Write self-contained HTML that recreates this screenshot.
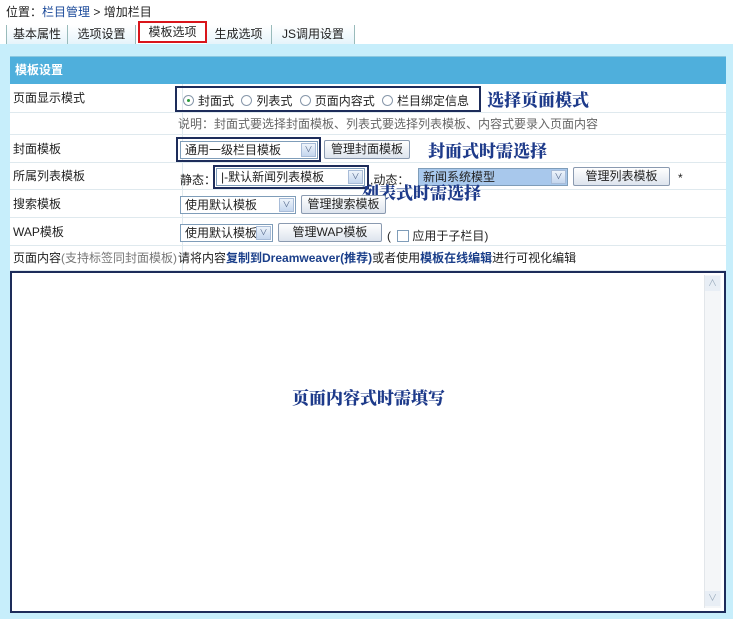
<!DOCTYPE html>
<html><head><meta charset="utf-8"><style>
*{margin:0;padding:0;box-sizing:border-box}
body{width:733px;height:619px;background:#fff;position:relative;overflow:hidden;font-family:"Liberation Sans","Noto Sans CJK SC",sans-serif;font-size:12px;color:#222}
.a{position:absolute;white-space:nowrap}
.tab{position:absolute;top:25px;height:20px;background:linear-gradient(#fff,#e4f3fa);border-right:1px solid #9bb;font-size:12px;line-height:19px;text-align:center}
.row{position:absolute;left:10px;width:716px;border-bottom:1px solid #dfe9ee;background:#fff}
.lab{position:absolute;left:3px;line-height:inherit}
.vl{position:absolute;left:172px;top:0;bottom:0;border-left:1px solid #dfe9ee}
.sel{position:absolute;height:18px;border:1px solid #7f9db9;background:#fff;font-size:12px;line-height:16px;padding-left:4px}
.sel i{position:absolute;right:1px;top:1px;width:15px;height:14px;background:linear-gradient(#eef4fb,#c4d6ee);border:1px solid #a8bcd8;font-style:normal;font-size:8px;line-height:12px;text-align:center;color:#4d6185}
.btn{position:absolute;height:19px;border:1px solid #8a9ab0;border-radius:2px;background:linear-gradient(#fff,#dde4ee);font-size:12px;line-height:17px;text-align:center}
.hint{position:absolute;font-family:"Noto Serif CJK SC",serif;font-weight:900;color:#1d3a8a;font-size:17px;white-space:nowrap}
.radio{display:inline-block;width:11px;height:11px;border:1px solid #8797aa;border-radius:50%;vertical-align:-1px;margin:0 4px 0 0;position:relative;background:#fff}
.box{position:absolute;border:2px solid #1d2c5a}
</style></head><body>
<div class="a" style="left:6px;top:3px;font-size:12px">位置：<span style="color:#1b4a9a">栏目管理</span> &gt; 增加栏目</div>
<div class="tab" style="left:6px;width:62px;border-left:1px solid #9bb">基本属性</div>
<div class="tab" style="left:68px;width:68px">选项设置</div>
<div class="tab" style="left:206px;width:66px">生成选项</div>
<div class="tab" style="left:272px;width:83px">JS调用设置</div>
<div class="a" style="left:138px;top:21px;width:69px;height:22px;border:2px solid #d9151b;background:#fff;text-align:center;line-height:18px">模板选项</div>
<div class="a" style="left:0;top:44px;width:733px;height:575px;background:#c7eefb"></div>
<div class="a" style="left:10px;top:56px;width:716px;height:557px;background:#fff;border:1px solid #8cc8e0"></div>
<div class="a" style="left:10px;top:57px;width:716px;height:27px;background:#4fafdc;color:#fff;font-weight:bold;line-height:27px;padding-left:5px">模板设置</div>
<div class="row" style="top:84px;height:29px;line-height:29px"><span class="lab">页面显示模式</span><div class="vl"></div></div>
<div class="row" style="top:113px;height:22px;line-height:22px"><div class="vl"></div><span class="a" style="left:168px;color:#666">说明：封面式要选择封面模板、列表式要选择列表模板、内容式要录入页面内容</span></div>
<div class="row" style="top:135px;height:28px;line-height:28px"><span class="lab">封面模板</span><div class="vl"></div></div>
<div class="row" style="top:163px;height:27px;line-height:27px"><span class="lab">所属列表模板</span><div class="vl"></div></div>
<div class="row" style="top:190px;height:28px;line-height:28px"><span class="lab">搜索模板</span><div class="vl"></div></div>
<div class="row" style="top:218px;height:28px;line-height:28px"><span class="lab">WAP模板</span><div class="vl"></div></div>
<div class="row" style="top:246px;height:25px;line-height:25px"><span class="lab">页面内容<span style="color:#777">(支持标签同封面模板)</span></span><div class="vl"></div><span class="a" style="left:168px">请将内容<b style="color:#1b3f8a">复制到Dreamweaver(推荐)</b>或者使用<b style="color:#1b3f8a">模板在线编辑</b>进行可视化编辑</span></div>

<div class="box" style="left:175px;top:86px;width:306px;height:26px"></div>
<div class="a" style="left:183px;top:92px"><span class="radio"><span style="position:absolute;left:3px;top:3px;width:3px;height:3px;border-radius:50%;background:#2a9a3a"></span></span>封面式 <span class="radio" style="margin-left:4px"></span>列表式 <span class="radio" style="margin-left:4px"></span>页面内容式 <span class="radio" style="margin-left:4px"></span>栏目绑定信息</div>
<div class="hint" style="left:487px;top:86px">选择页面模式</div>

<div class="box" style="left:176px;top:137px;width:145px;height:25px"></div>
<div class="sel" style="left:180px;top:141px;width:138px">通用一级栏目模板<i>∨</i></div>
<div class="btn" style="left:324px;top:140px;width:86px">管理封面模板</div>
<div class="hint" style="left:428px;top:137px">封面式时需选择</div>

<div class="a" style="left:180px;top:171px">静态：</div>
<div class="box" style="left:213px;top:165px;width:156px;height:24px"></div>
<div class="sel" style="left:216px;top:168px;width:149px">|-默认新闻列表模板<i>∨</i></div>
<div class="a" style="left:370px;top:171px">,动态：</div>
<div class="sel" style="left:418px;top:168px;width:150px;background:#a8c8ec">新闻系统模型<i style="background:linear-gradient(#eef4fb,#c4d6ee)">∨</i></div>
<div class="btn" style="left:573px;top:167px;width:97px">管理列表模板</div>
<div class="a" style="left:678px;top:171px">*</div>
<div class="hint" style="left:362px;top:179px">列表式时需选择</div>

<div class="sel" style="left:180px;top:196px;width:116px">使用默认模板<i>∨</i></div>
<div class="btn" style="left:301px;top:195px;width:85px">管理搜索模板</div>

<div class="sel" style="left:180px;top:224px;width:93px">使用默认模板<i>∨</i></div>
<div class="btn" style="left:278px;top:223px;width:104px">管理WAP模板</div>
<div class="a" style="left:387px;top:227px">( <span style="display:inline-block;width:12px;height:12px;border:1px solid #7f9db9;vertical-align:-2px;margin:0 3px"></span>应用于子栏目)</div>

<div class="a" style="left:10px;top:271px;width:716px;height:342px;border:2px solid #1d2c5a;background:#fff"></div>
<div class="a" style="left:704px;top:275px;width:17px;height:333px;background:#f4f6f8;border-left:1px solid #e2e6ea"></div>
<div class="a" style="left:705px;top:276px;width:15px;height:15px;background:#e8eef5;color:#9ab;font-size:9px;text-align:center">∧</div>
<div class="a" style="left:705px;top:591px;width:15px;height:15px;background:#e8eef5;color:#9ab;font-size:9px;text-align:center">∨</div>
<div class="hint" style="left:292px;top:384px">页面内容式时需填写</div>
</body></html>
